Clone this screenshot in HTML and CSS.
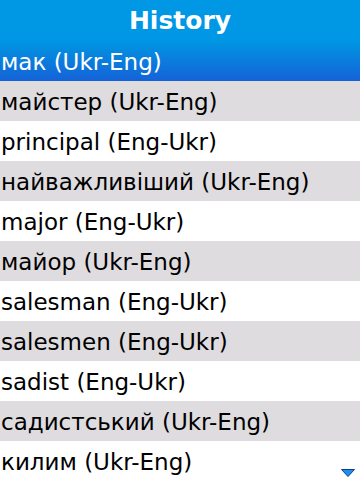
FILE: index.html
```html
<!DOCTYPE html>
<html lang="en">
<head>
    <meta charset="UTF-8">
    <meta name="viewport" content="width=device-width, initial-scale=1.0">
    <title>History</title>
    <link rel="stylesheet" href="styles.css">
</head>
<body>
    <div class="screen">
        <div class="header">History</div>
        <ul class="history">
            <li class="selected">мак (Ukr-Eng)</li>
            <li>майстер (Ukr-Eng)</li>
            <li>principal (Eng-Ukr)</li>
            <li>найважливіший (Ukr-Eng)</li>
            <li>major (Eng-Ukr)</li>
            <li>майор (Ukr-Eng)</li>
            <li>salesman (Eng-Ukr)</li>
            <li>salesmen (Eng-Ukr)</li>
            <li>sadist (Eng-Ukr)</li>
            <li>садистський (Ukr-Eng)</li>
            <li>килим (Ukr-Eng)</li>
        </ul>
        <svg class="more" width="14" height="8" viewBox="0 0 14 8">
            <polygon points="0.5,0.5 13.5,0.5 7,7.5" fill="#1e8ff0" stroke="#0a3f8a" stroke-width="1"/>
        </svg>
    </div>
</body>
</html>
```

FILE: styles.css
```css
body {
    margin: 0;
    background-color: #fff;
    font-family: "DejaVu Sans", sans-serif;
}
.screen {
    position: relative;
    width: 360px;
    height: 480px;
    overflow: hidden;
}
.header {
    height: 41px;
    line-height: 42px;
    background-color: #0097e4;
    color: #fff;
    font-weight: bold;
    font-size: 25px;
    text-align: center;
}
.history {
    list-style: none;
    margin: 0;
    padding: 0;
}
.history li {
    height: 40px;
    line-height: 42px;
    padding-left: 1px;
    font-size: 23px;
    color: #000;
    white-space: nowrap;
}
.history li:nth-child(even) {
    background-color: #dedcdf;
}
.history li.selected {
    background: linear-gradient(#0096e2, #1562d8);
    color: #fff;
}
.more {
    position: absolute;
    right: 5px;
    bottom: 3px;
}
```
